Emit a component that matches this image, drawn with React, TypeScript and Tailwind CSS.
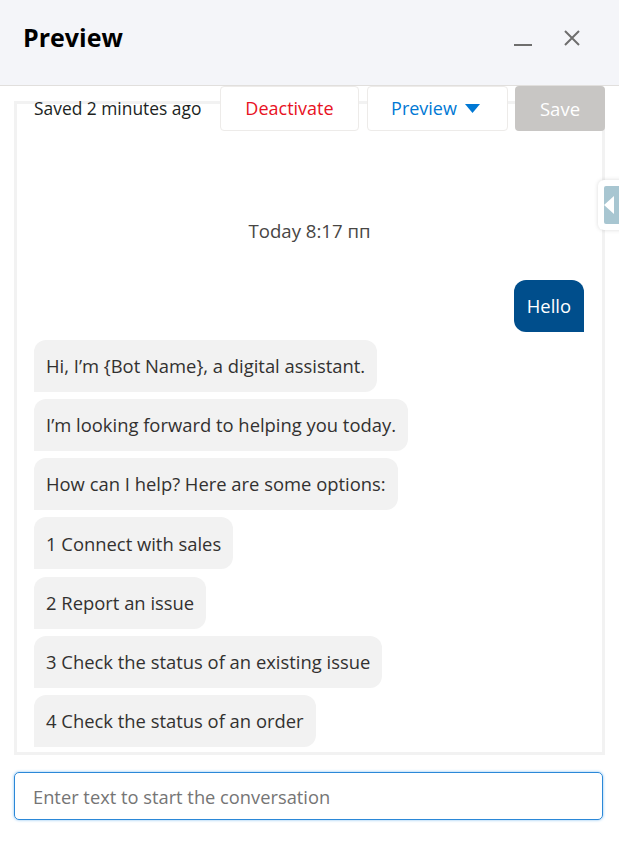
import { useState } from "react";

const botMessages = [
  "Hi, I’m {Bot Name}, a digital assistant.",
  "I’m looking forward to helping you today.",
  "How can I help? Here are some options:",
  "1 Connect with sales",
  "2 Report an issue",
  "3 Check the status of an existing issue",
  "4 Check the status of an order",
];

export default function App() {
  const [text, setText] = useState("");

  return (
    <div
      className="relative w-[619px] h-[863px] bg-white overflow-hidden text-[#323130]"
      style={{ fontFamily: '"Open Sans", "Noto Sans", sans-serif' }}
    >
      {/* Header */}
      <div className="h-[86px] bg-[#f4f5f9] border-b border-[#e1dfdd] flex items-center justify-between pl-[23px] pr-[38px]">
        <h1 className="text-[25px] font-bold text-black -mt-[10px]">Preview</h1>
        <div className="flex items-center gap-[31px] -mt-[10px]">
          <span className="block w-[18px] h-[2px] bg-[#6e6e6e] mt-[14px]" />
          <svg width="18" height="18" viewBox="0 0 18 18" stroke="#6e6e6e" strokeWidth="2">
            <path d="M2 2 L16 16 M16 2 L2 16" />
          </svg>
        </div>
      </div>

      {/* Chat panel */}
      <div className="mx-[14px] mt-[15px] h-[654px] border-[3px] border-[#f2f2f2] flex flex-col">
        <div className="flex items-center -mt-[18px] -mr-[3px] h-[45px]">
          <span className="pl-[17px] text-[17.4px] text-[#201f1e] flex-1">Saved 2 minutes ago</span>
          <button className="w-[139px] h-[45px] bg-white border border-[#edebe9] rounded-[4px] text-[18px] text-[#e81123]">
            Deactivate
          </button>
          <button className="ml-[8px] w-[141px] h-[45px] bg-white border border-[#edebe9] rounded-[4px] text-[18px] text-[#0078d4] flex items-center justify-center gap-[8px] pr-[4px]">
            Preview
            <svg width="15" height="9" viewBox="0 0 15 9" fill="#0078d4">
              <path d="M0 0 H15 L7.5 9 Z" />
            </svg>
          </button>
          <button className="ml-[7px] w-[90px] h-[45px] bg-[#c8c6c4] rounded-[4px] text-[18.5px] text-white">
            Save
          </button>
        </div>

        <div className="flex-1 flex flex-col px-[17px] overflow-hidden">
          <div className="mt-[86px] text-center text-[18.6px] text-[#484644]">Today 8:17 пп</div>
          <div className="mt-[35px] flex justify-end pr-[1px]">
            <div className="h-[52px] px-[13px] flex items-center bg-[#004e8c] text-white text-[18.4px] rounded-t-[12px] rounded-bl-[12px]">
              Hello
            </div>
          </div>
          <div className="mt-[8px] flex flex-col items-start gap-[7.2px]">
            {botMessages.map((m) => (
              <div
                key={m}
                className="h-[52px] px-[12px] flex items-center bg-[#f2f2f2] text-[18.4px] text-[#323130] rounded-t-[12px] rounded-br-[12px]"
              >
                {m}
              </div>
            ))}
          </div>
        </div>
      </div>

      {/* Input */}
      <div className="mx-[14px] mt-[17px]">
        <input
          value={text}
          onChange={(e) => setText(e.target.value)}
          placeholder="Enter text to start the conversation"
          className="w-[589px] h-[48px] px-[18px] rounded-[5px] border border-[#2b88d8] shadow-[0_0_3px_#7fbdf0] text-[18.3px] outline-none placeholder:text-[#757575]"
        />
      </div>

      {/* Side tab */}
      <div className="absolute left-[598px] top-[180px] w-[30px] h-[50px] bg-white rounded-l-[6px] shadow-[0_0_4px_rgba(0,0,0,0.15)] p-[6px] pr-0">
        <div className="h-full bg-[#a8c6d1] rounded-l-[2px] flex items-center">
          <svg width="10" height="18" viewBox="0 0 10 18" fill="white">
            <path d="M0 9 L10 0 V18 Z" />
          </svg>
        </div>
      </div>
    </div>
  );
}
